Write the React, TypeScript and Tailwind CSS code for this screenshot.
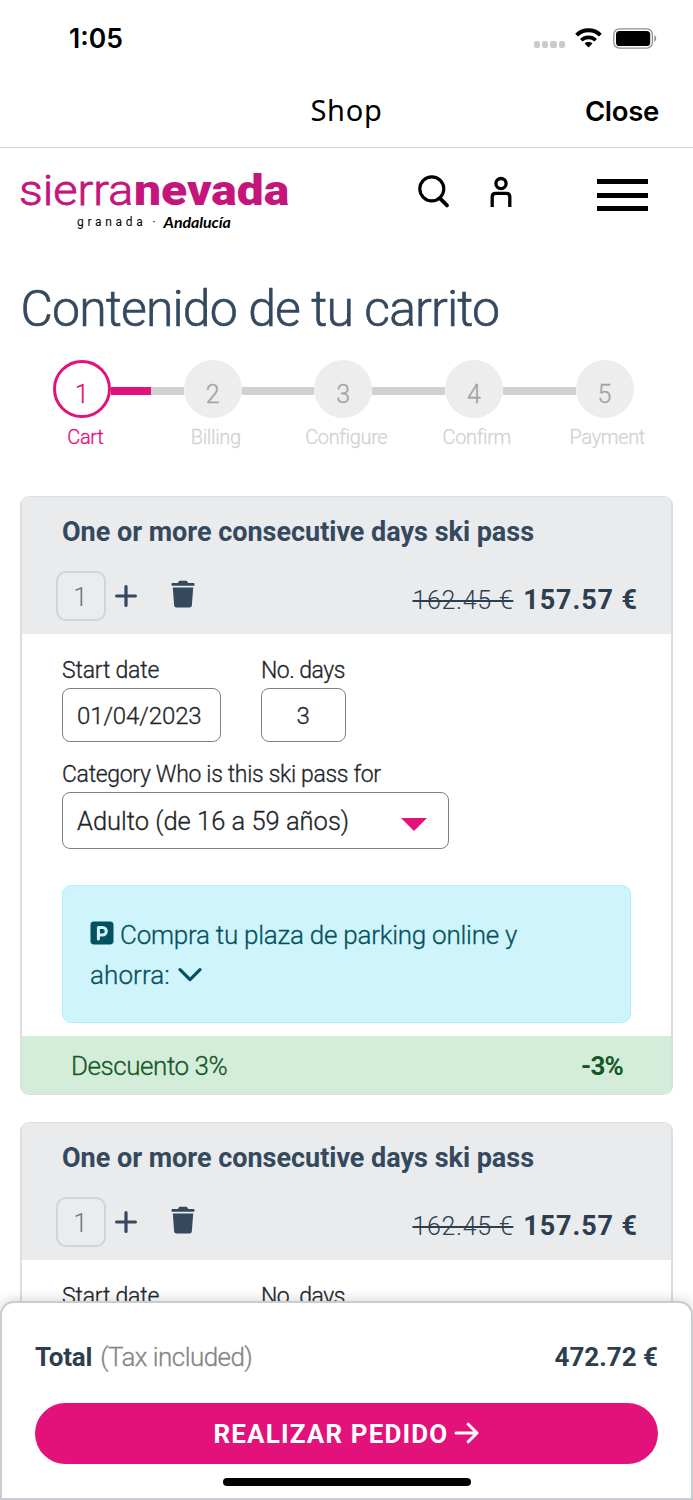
import React from "react";

const steps = ["Cart", "Billing", "Configure", "Confirm", "Payment"];

const passes = [
  { id: 1, qty: 1, oldPrice: "162.45 €", price: "157.57 €", date: "01/04/2023", days: 3 },
  { id: 2, qty: 1, oldPrice: "162.45 €", price: "157.57 €", date: "01/04/2023", days: 3 },
];

const StatusBar = () => (
  <div className="flex h-[76px] shrink-0 items-center justify-between pl-[69px] pr-[35px] font-['Inter'] text-black">
    <span className="text-[26.5px] leading-[76px] font-semibold">1:05</span>
    <div className="flex items-center">
      {/* No signal dots */}
      <div className="mt-3 mr-2.5 flex gap-[2px]">
        <span className="h-[7px] w-[6.3px] rounded-[2px] bg-[#cbcbcb]"></span>
        <span className="h-[7px] w-[6.3px] rounded-[2px] bg-[#cbcbcb]"></span>
        <span className="h-[7px] w-[6.3px] rounded-[2px] bg-[#cbcbcb]"></span>
        <span className="h-[7px] w-[6.3px] rounded-[2px] bg-[#cbcbcb]"></span>
      </div>
      {/* Wifi */}
      <svg width="27" height="20" viewBox="0 0 27 20" fill="none" stroke="#000">
        <path d="M1.6 7.2C8.2 0.7 18.8 0.7 25.4 7.2" strokeWidth="4" />
        <path d="M6.3 12.2C10.3 8.4 16.7 8.4 20.7 12.2" strokeWidth="3.6" />
        <path d="M13.5 19.5L9.6 15.4C11.8 13.5 15.2 13.5 17.4 15.4Z" fill="#000" stroke="none" />
      </svg>
      {/* Battery */}
      <svg className="ml-[11px]" width="45" height="21" viewBox="0 0 45 21">
        <rect x="0.8" y="0.8" width="38.6" height="19.4" rx="5.6" fill="none" stroke="#8e8e8e" strokeWidth="1.3" />
        <rect x="3" y="3" width="34.2" height="15" rx="3.6" fill="#000" />
        <path d="M41.3 7.2C43.8 8.2 43.8 12.8 41.3 13.8Z" fill="#8e8e8e" />
      </svg>
    </div>
  </div>
);

const NavBar = () => (
  <div className="grid h-[72px] shrink-0 grid-cols-3 items-center border-b border-[#d3d3d4] pr-[34px] pl-[34px] text-black">
    <span></span>
    <span className="pb-1 text-center font-['Noto_Sans'] text-[29px] leading-[66px] tracking-[0.7px]">Shop</span>
    <span className="pb-0.5 text-right font-['Inter'] text-[27.5px] leading-[68px] font-semibold tracking-[-0.3px]">Close</span>
  </div>
);

const Header = () => (
  <div className="flex h-[102px] shrink-0 items-start pl-5 pr-[45px]">
    {/* Logo */}
    <div className="w-[270px] pt-[17px]">
      <div className="-ml-px flex text-[43px] leading-[50px] text-[#c4157c]">
        <span className="w-[115px] origin-left scale-x-[1.09] font-light [-webkit-text-stroke:0.8px_#c4157c]">sierra</span>
        <span className="origin-left scale-x-[1.115] font-black">nevada</span>
      </div>
      <div className="-mt-0.5 flex items-center pl-[57px] leading-[18px] text-black">
        <span className="text-[12px] tracking-[3.7px]">granada</span>
        <span className="ml-1.5 text-[12px]">·</span>
        <span className="ml-2 font-['Lato'] text-[16px] font-bold tracking-[-0.1px] italic">Andalucía</span>
      </div>
    </div>
    <div className="ml-auto flex pt-[27px]">
      <svg width="32" height="34" viewBox="0 0 32 34" fill="none" stroke="#000" strokeWidth="3.2">
        <circle cx="13.8" cy="13.8" r="12" />
        <path d="M21.8 23.2L29 30.4" strokeWidth="3.8" strokeLinecap="round" />
      </svg>
      <svg className="mt-px ml-[40px]" width="22" height="33" viewBox="0 0 22 33" fill="none" stroke="#000" strokeWidth="3.3">
        <circle cx="11" cy="7.6" r="5.1" />
        <path d="M2.2 31V20.8C2.2 18.6 3.4 17.4 5.6 17.4H16.4C18.6 17.4 19.8 18.6 19.8 20.8V31" />
      </svg>
      <div className="mt-1 ml-[85px] flex w-[51px] flex-col gap-2">
        <span className="h-[5px] bg-black"></span>
        <span className="mt-px h-[5px] bg-black"></span>
        <span className="h-[5px] bg-black"></span>
      </div>
    </div>
  </div>
);

const Stepper = () => (
  <div>
    <div className="flex w-[633.5px] items-center pl-[53px]">
      {steps.map((step, i) => (
        <React.Fragment key={step}>
          {i > 0 && (
            <div className="mt-1 flex h-2 flex-1 bg-[#d0d0d0]">
              {i === 1 && <div className="w-10 bg-[#e3117a]"></div>}
            </div>
          )}
          <div
            className={
              i === 0
                ? "flex h-[58px] w-[58px] items-center justify-center rounded-full border-[3px] border-[#e3117a] pt-3 text-[25px] font-light text-[#e3117a] [-webkit-text-stroke:0.3px]"
                : "flex h-[58px] w-[58px] items-center justify-center rounded-full bg-[#ededed] pt-3 text-[25px] font-light text-[#a3a3a3] [-webkit-text-stroke:0.3px]"
            }
          >
            {i + 1}
          </div>
        </React.Fragment>
      ))}
    </div>
    <div className="flex pt-px pl-5">
      {steps.map((step, i) => (
        <span
          key={step}
          className={
            i === 0
              ? "w-[130.5px] text-center text-[20px] leading-9 font-light tracking-[-0.35px] text-[#e3117a] [-webkit-text-stroke:0.3px]"
              : "w-[130.5px] text-center text-[20px] leading-9 font-light tracking-[-0.35px] text-[#d2d2d2] [-webkit-text-stroke:0.3px]"
          }
        >
          {step}
        </span>
      ))}
    </div>
  </div>
);

const PassCard = ({ pass }: { pass: (typeof passes)[0] }) => (
  <div className="mx-5 mb-[27px] shrink-0 overflow-hidden rounded-[9px] border-x-2 border-y border-[#dcdee0] bg-white">
    {/* Card header */}
    <div className="h-[137px] bg-[#e9ebed] pt-4">
      <h2 className="pl-10 text-[27px] leading-[38px] font-bold tracking-[-0.02px] text-[#34495e]">One or more consecutive days ski pass</h2>
      <div className="mt-5 flex h-[50px] items-center pr-[33px] pl-[33.5px]">
        <div className="flex h-[50px] w-[50px] items-center justify-center rounded-[10px] border-2 border-[#ced4da] bg-[#e9edf0] pt-0.5 text-[26px] font-light text-[#6c757d]">
          {pass.qty}
        </div>
        <svg className="ml-2" width="24" height="24" viewBox="0 0 24 24" stroke="#34495e" strokeWidth="3.2" strokeLinecap="round">
          <path d="M12 2.6V21.4M2.6 12H21.4" />
        </svg>
        <svg className="mb-1 ml-[33px]" width="24" height="28" viewBox="0 0 24 28" fill="#34495e">
          <path d="M1.6 3H6.8L7.8 1.4C8 1 8.4.8 8.8.8H15.2C15.6.8 16 1 16.2 1.4L17.2 3H22.4C24 3 24 5.8 22.4 5.8H1.6C0 5.8 0 3 1.6 3Z" />
          <path d="M1.8 7.6H22.2L20.9 25C20.8 26.7 19.9 27.5 18.3 27.5H5.7C4.1 27.5 3.2 26.7 3.1 25Z" />
        </svg>
        <div className="mt-2 ml-auto whitespace-nowrap text-[#2c3e50]">
          <span className="mr-2.5 text-[25px] font-light tracking-[0.7px] line-through">{pass.oldPrice}</span>
          <span className="text-[27px] font-bold tracking-[0.9px]">{pass.price}</span>
        </div>
      </div>
    </div>

    {/* Fields */}
    <div className="px-10 pt-[18px] text-[#212529] [-webkit-text-stroke:0.3px]">
      <div className="flex gap-10">
        <div className="w-[159px]">
          <div className="pt-px text-[23px] leading-[35px] font-light tracking-[-0.2px]">Start date</div>
          <div className="flex h-[54px] items-center rounded-lg border-[1.5px] border-[#808080] pt-px pl-3.5 text-[24px] font-light tracking-[-0.1px]">{pass.date}</div>
        </div>
        <div className="w-[84.5px]">
          <div className="pt-px text-[23px] leading-[35px] font-light tracking-[-0.5px] whitespace-nowrap">No. days</div>
          <div className="flex h-[54px] items-center justify-center rounded-lg border-[1.5px] border-[#808080] pt-px text-[24px] font-light">{pass.days}</div>
        </div>
      </div>
      <div className="mt-[15px] text-[23px] leading-[35px] font-light tracking-[-0.32px]">Category Who is this ski pass for</div>
      <div className="flex h-[57px] w-[386.5px] items-center justify-between rounded-lg border-[1.5px] border-[#808080] pr-[21px] pl-3.5 text-[25.5px] font-light">
        <span className="pt-0.5">Adulto (de 16 a 59 años)</span>
        <svg className="mt-2" width="26" height="13" viewBox="0 0 26 13">
          <path d="M0 0H26L13 13Z" fill="#e3117a" />
        </svg>
      </div>
      <div className="mt-9 mb-[13px] h-[138px] rounded-[9px] border-[1.5px] border-[#b6effb] bg-[#cff4fc] pt-[29px] pl-[27px] text-[26px] leading-10 font-light tracking-[-0.24px] text-[#055160]">
        <svg className="mr-1.5 mb-2 inline-block" width="24" height="24" viewBox="0 0 24 24">
          <rect x="0.5" y="0.5" width="23" height="23" rx="3.4" fill="#055160" />
          <path d="M8.4 18V6.5H12.6A3.7 3.7 0 0 1 12.6 13.9H8.4" fill="none" stroke="#cff4fc" strokeWidth="3" strokeLinecap="round" strokeLinejoin="round" />
        </svg>
        Compra tu plaza de parking online y
        <br />
        <span className="tracking-[0.1px]">ahorra:</span>
        <svg className="mb-1 ml-2 inline-block" width="24" height="16" viewBox="0 0 24 16" fill="none" stroke="#055160" strokeWidth="3.2" strokeLinecap="round" strokeLinejoin="round">
          <path d="M2 2.6L12 12.6L22 2.6" />
        </svg>
      </div>
    </div>

    {/* Discount */}
    <div className="flex h-[58px] items-center justify-between bg-[#d4edda] pt-0.5 pr-12 pl-[49px] text-[26px] text-[#155724]">
      <span className="font-light tracking-[-0.45px] [-webkit-text-stroke:0.3px]">Descuento 3%</span>
      <span className="font-bold tracking-[-0.8px]">-3%</span>
    </div>
  </div>
);

const CheckoutBar = () => (
  <div className="absolute inset-x-0 bottom-0 flex h-[199px] flex-col rounded-t-[14px] border-2 border-[#c9cdd1] bg-white px-[33px] shadow-[0_-2px_12px_rgba(0,0,0,0.15)]">
    <div className="mt-[34px] flex items-center justify-between text-[26px] leading-10 text-[#2c3e50]">
      <span>
        <b className="font-bold tracking-[-0.2px]">Total</b>
        <span className="ml-2 font-light tracking-[-0.55px] text-[#858585] [-webkit-text-stroke:0.3px]">(Tax included)</span>
      </span>
      <b className="font-bold">472.72 €</b>
    </div>
    <button className="mt-[26px] flex h-[61px] shrink-0 items-center justify-center rounded-full bg-[#e3117a] pt-0.5 text-[26px] font-bold tracking-[1.15px] text-white">
      REALIZAR PEDIDO
      <svg className="mb-1 ml-1.5" width="25" height="22" viewBox="0 0 25 22" fill="none" stroke="#fff" strokeWidth="3" strokeLinecap="round" strokeLinejoin="round">
        <path d="M2 11H22.5M14.2 2.2L23 11L14.2 19.8" />
      </svg>
    </button>
    <div className="mt-3.5 h-2 w-[248px] self-center rounded-full bg-black"></div>
  </div>
);

export default function App() {
  return (
    <div className="relative flex h-[1500px] w-[693px] flex-col overflow-hidden bg-white font-['Roboto',sans-serif]">
      <StatusBar />
      <NavBar />
      <Header />
      <h1 className="mt-[29px] shrink-0 pl-[20.5px] text-[50px] leading-[60px] font-light tracking-[-0.9px] text-[#34495e] [-webkit-text-stroke:0.6px]">Contenido de tu carrito</h1>
      <div className="mt-[21px] mb-[41px] shrink-0">
        <Stepper />
      </div>
      {passes.map((pass) => (
        <PassCard key={pass.id} pass={pass} />
      ))}
      <CheckoutBar />
    </div>
  );
}
